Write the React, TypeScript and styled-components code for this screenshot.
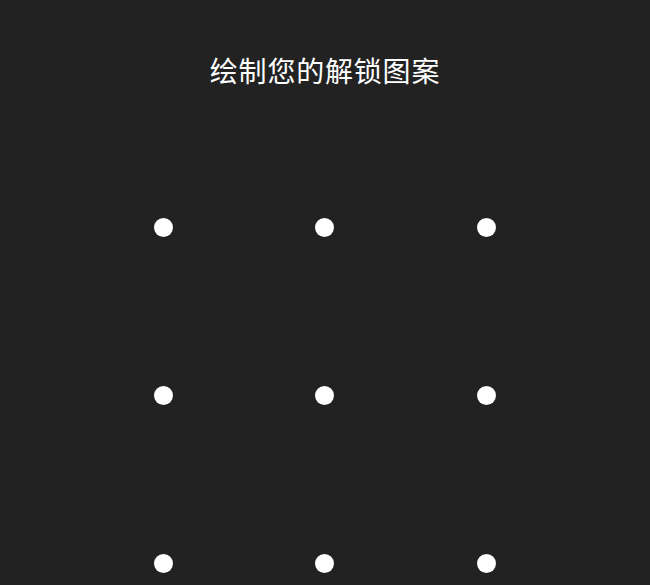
import React from 'react';
import styled, { createGlobalStyle } from 'styled-components';

const GlobalStyle = createGlobalStyle`
  html, body {
    margin: 0;
    padding: 0;
    background-color: #222222;
  }
  body {
    font-family: "Noto Sans CJK SC", "Noto Sans", sans-serif;
  }
`;

const Screen = styled.div`
  width: 650px;
  height: 585px;
  overflow: hidden;
  display: flex;
  flex-direction: column;
  align-items: center;
  background-color: #222222;
`;

const Title = styled.h1`
  margin: 50px 0 0;
  font-size: 28px;
  line-height: 40px;
  font-weight: 400;
  color: #ffffff;
  letter-spacing: 0.8px;
`;

const Grid = styled.div`
  margin-top: 53px;
  width: 485px;
  display: grid;
  grid-template-columns: repeat(3, 1fr);
  grid-auto-rows: 168px;
`;

const Cell = styled.div`
  display: flex;
  align-items: center;
  justify-content: center;
`;

const Dot = styled.span`
  width: 19px;
  height: 19px;
  border-radius: 50%;
  background-color: #ffffff;
`;

const App: React.FC = () => {
  return (
    <>
      <GlobalStyle />
      <Screen>
        <Title>绘制您的解锁图案</Title>
        <Grid>
          {Array.from({ length: 9 }).map((_, index) => (
            <Cell key={index}>
              <Dot />
            </Cell>
          ))}
        </Grid>
      </Screen>
    </>
  );
};

export default App;
